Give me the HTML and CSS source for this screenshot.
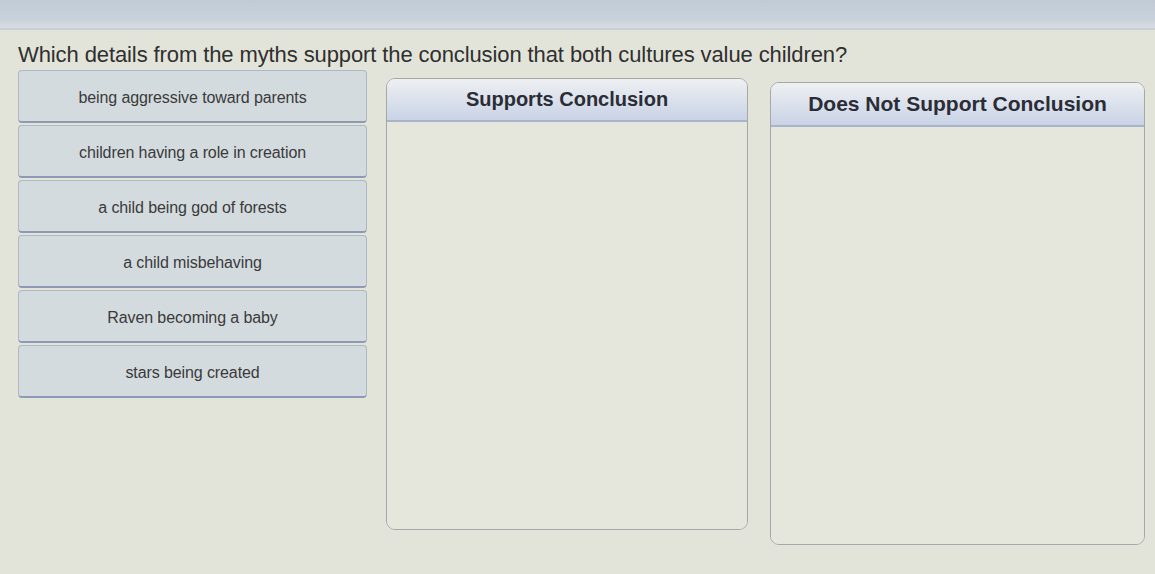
FILE: index.html
```html
<!DOCTYPE html>
<html lang="en">
<head>
    <meta charset="UTF-8">
    <meta name="viewport" content="width=device-width, initial-scale=1.0">
    <title>Drag and Drop</title>
    <link rel="stylesheet" href="styles.css">
</head>
<body>

    <div class="topbar"></div>

    <div class="question">
        <p class="prompt">Which details from the myths support the conclusion that both cultures value children?</p>

        <div class="board">
            <!-- answer tiles the student drags into a column -->
            <div class="tiles">
                <div class="tile">being aggressive toward parents</div>
                <div class="tile">children having a role in creation</div>
                <div class="tile">a child being god of forests</div>
                <div class="tile">a child misbehaving</div>
                <div class="tile">Raven becoming a baby</div>
                <div class="tile">stars being created</div>
            </div>

            <div class="drop drop-yes">
                <div class="drop-title">Supports Conclusion</div>
                <div class="drop-body"></div>
            </div>

            <div class="drop drop-no">
                <div class="drop-title">Does Not Support Conclusion</div>
                <div class="drop-body"></div>
            </div>
        </div>
    </div>

</body>
</html>
```

FILE: styles.css
```css
* {
  margin: 0;
  padding: 0;
  box-sizing: border-box;
  font-family: "Liberation Sans", Arial, sans-serif;
}

body {
  min-height: 100vh;
  background: #e3e4d9;
  overflow: hidden;
}

.topbar {
  height: 30px;
  background: linear-gradient(to bottom, #c1cbd6 0%, #c9d2db 70%, #d9dde0 100%);
  border-bottom: 2px solid #c9cfd4;
}

.question {
  padding: 12px 0 0 18px;
}

.prompt {
  font-size: 22px;
  line-height: 26px;
  color: #2f2f2f;
  letter-spacing: -0.1px;
  margin-bottom: 2px;
}

.board {
  display: flex;
  align-items: flex-start;
}

.tiles {
  width: 349px;
  display: flex;
  flex-direction: column;
  gap: 2px;
}

.tile {
  height: 53px;
  display: flex;
  align-items: center;
  justify-content: center;
  padding-top: 4px;
  background: #d4dbdf;
  border: 1px solid #aeb7c6;
  border-bottom: 2px solid #8f99b6;
  border-radius: 4px;
  font-size: 16px;
  letter-spacing: -0.1px;
  color: #3a3a3a;
}

.drop {
  border: 1px solid #a6a8a8;
  border-radius: 9px;
  overflow: hidden;
  display: flex;
  flex-direction: column;
}

.drop-yes {
  width: 362px;
  height: 452px;
  margin: 8px 0 0 19px;
}

.drop-no {
  width: 375px;
  height: 463px;
  margin: 12px 0 0 22px;
}

.drop-title {
  height: 43px;
  display: flex;
  align-items: center;
  justify-content: center;
  background: linear-gradient(to bottom, #eef0f2, #c9d3e6);
  border-bottom: 2px solid #a9b4c8;
  font-size: 20px;
  font-weight: bold;
  color: #2b2d36;
}

.drop-no .drop-title {
  height: 44px;
  font-size: 21px;
}

.drop-body {
  flex: 1;
  background: #e5e6dc;
}
```
